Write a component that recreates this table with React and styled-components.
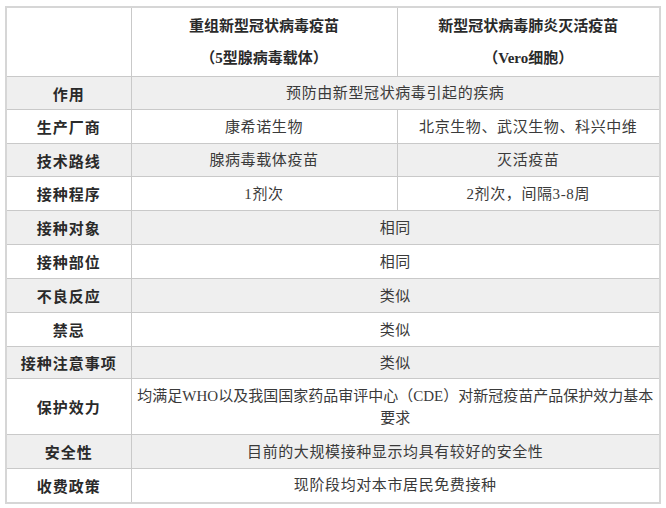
import React from 'react';
import styled, { createGlobalStyle } from 'styled-components';

const GlobalStyle = createGlobalStyle`
  body {
    margin: 0;
    background: #ffffff;
    font-family: "Liberation Serif", "Noto Sans CJK SC", serif;
  }
`;

const Page = styled.div`
  padding: 6px 7px 0 5px;
`;

const Table = styled.table`
  width: 654px;
  border-collapse: collapse;
  table-layout: fixed;
  border: 2px solid #d6d6d6;
  font-size: 15px;
  color: #3a3a3a;
`;

const Row = styled.tr`
  height: ${p => p.h || 34}px;
  background: ${p => (p.shaded ? '#efefef' : '#ffffff')};
`;

const HeadCell = styled.th`
  border: 1px solid #c9c9c9;
  font-weight: 700;
  color: #2a2a2a;
  line-height: 32px;
  padding: 2px 4px;
  text-align: center;
`;

const LabelCell = styled.td`
  border: 1px solid #c9c9c9;
  font-weight: 700;
  color: #2a2a2a;
  text-align: center;
  padding: 0 4px;
  letter-spacing: 1px;
`;

const Cell = styled.td`
  border: 1px solid #c9c9c9;
  text-align: center;
  padding: ${p => (p.tight ? '0 2px' : '0 6px')};
  line-height: 22px;
  letter-spacing: ${p => (p.tight ? '0' : '0.6px')};
`;

const rows = [
  { label: '作用', span: '预防由新型冠状病毒引起的疾病', h: 33 },
  { label: '生产厂商', a: '康希诺生物', b: '北京生物、武汉生物、科兴中维', h: 34 },
  { label: '技术路线', a: '腺病毒载体疫苗', b: '灭活疫苗', h: 33 },
  { label: '接种程序', a: '1剂次', b: '2剂次，间隔3-8周', h: 34 },
  { label: '接种对象', span: '相同', h: 34 },
  { label: '接种部位', span: '相同', h: 34 },
  { label: '不良反应', span: '类似', h: 34 },
  { label: '禁忌', span: '类似', h: 34 },
  { label: '接种注意事项', span: '类似', h: 32 },
  { label: '保护效力', span: '均满足WHO以及我国国家药品审评中心（CDE）对新冠疫苗产品保护效力基本要求', h: 56, tight: true },
  { label: '安全性', span: '目前的大规模接种显示均具有较好的安全性', h: 34 },
  { label: '收费政策', span: '现阶段均对本市居民免费接种', h: 34 },
];

export default function App() {
  return (
    <Page>
      <GlobalStyle />
      <Table>
        <colgroup>
          <col style={{ width: 125 }} />
          <col style={{ width: 266 }} />
          <col style={{ width: 263 }} />
        </colgroup>
        <tbody>
          <Row h={69}>
            <HeadCell />
            <HeadCell>重组新型冠状病毒疫苗<br />（5型腺病毒载体）</HeadCell>
            <HeadCell>新型冠状病毒肺炎灭活疫苗<br />（Vero细胞）</HeadCell>
          </Row>
          {rows.map((r, i) => (
            <Row key={r.label} h={r.h} shaded={i % 2 === 0}>
              <LabelCell>{r.label}</LabelCell>
              {r.span ? (
                <Cell colSpan={2} tight={r.tight}>{r.span}</Cell>
              ) : (
                <>
                  <Cell>{r.a}</Cell>
                  <Cell>{r.b}</Cell>
                </>
              )}
            </Row>
          ))}
        </tbody>
      </Table>
    </Page>
  );
}
